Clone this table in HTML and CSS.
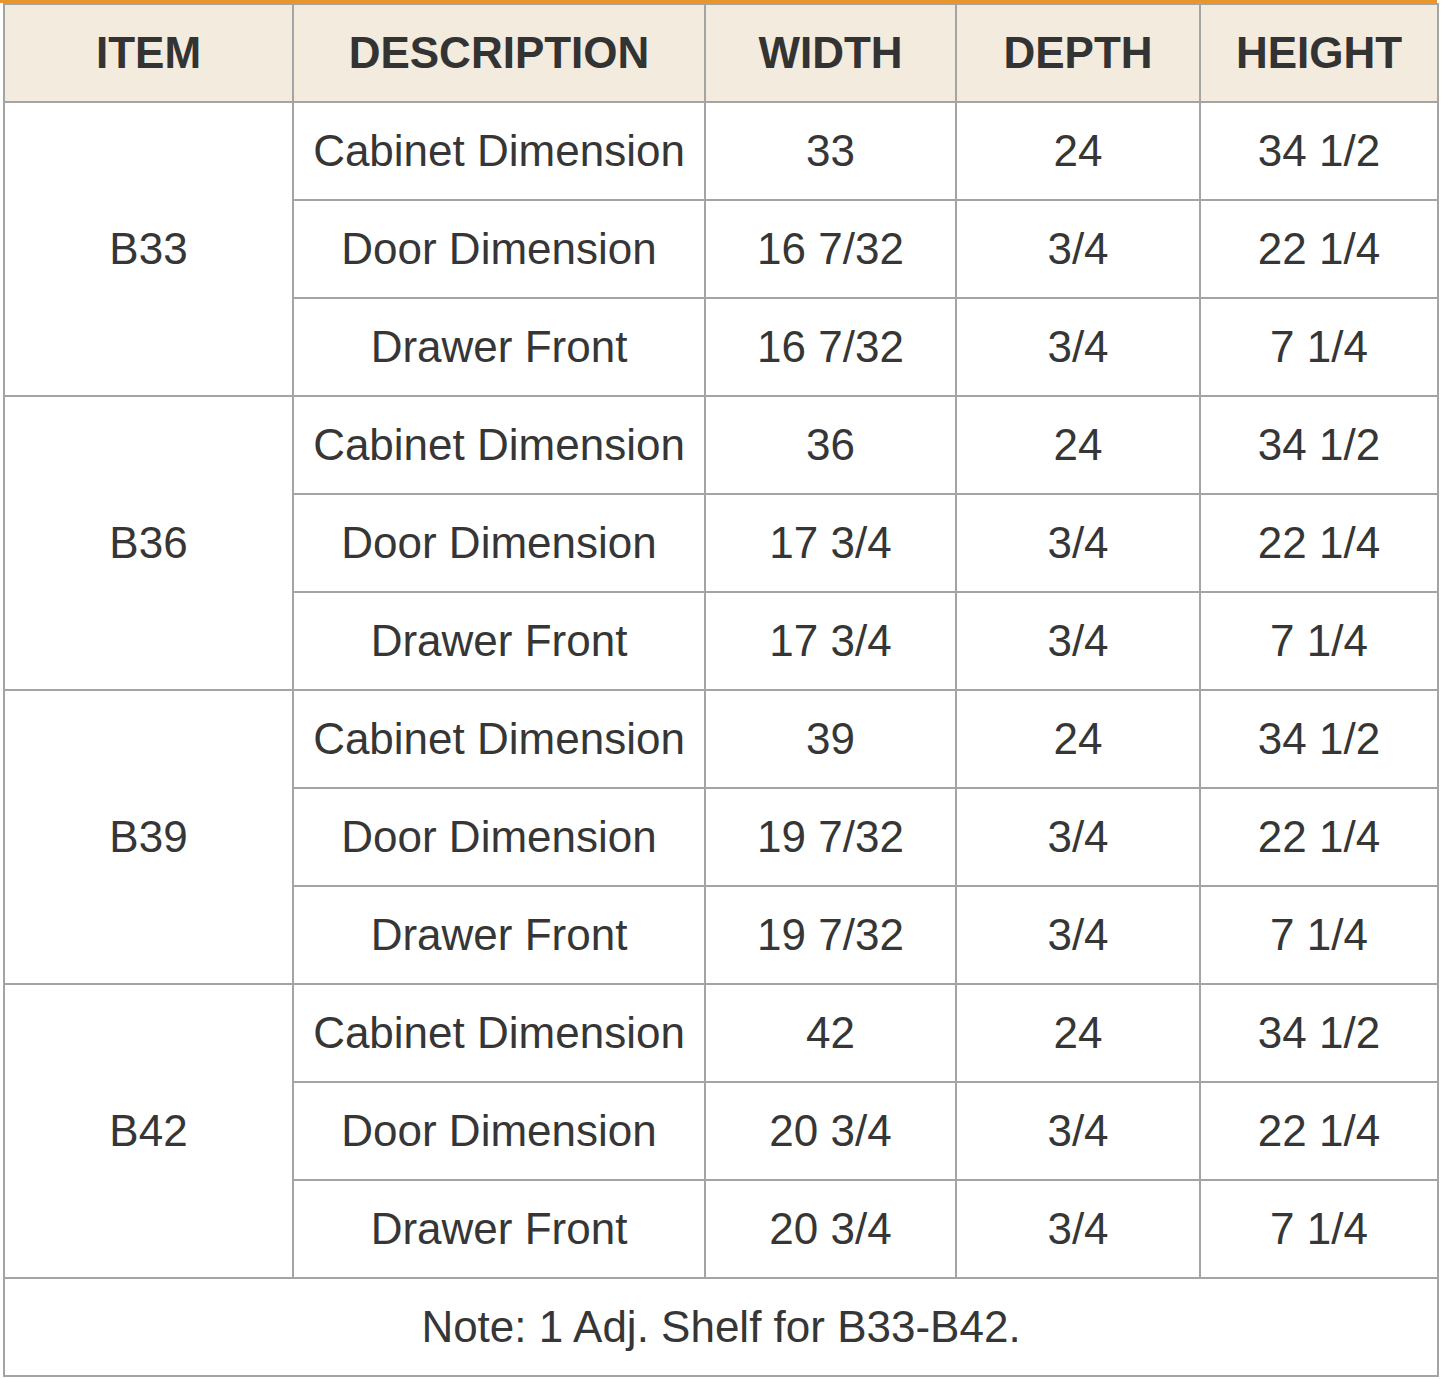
FILE: index.html
```html
<!DOCTYPE html>
<html>
<head>
<meta charset="utf-8">
<link rel="stylesheet" href="styles.css">
</head>
<body>
<div class="wrap">
<table class="spec">
<colgroup>
<col class="c1"><col class="c2"><col class="c3"><col class="c4"><col class="c5">
</colgroup>
<thead>
<tr><th>ITEM</th><th>DESCRIPTION</th><th>WIDTH</th><th>DEPTH</th><th>HEIGHT</th></tr>
</thead>
<tbody>
<tr><td rowspan="3">B33</td><td>Cabinet Dimension</td><td>33</td><td>24</td><td>34 1/2</td></tr>
<tr><td>Door Dimension</td><td>16 7/32</td><td>3/4</td><td>22 1/4</td></tr>
<tr><td>Drawer Front</td><td>16 7/32</td><td>3/4</td><td>7 1/4</td></tr>
<tr><td rowspan="3">B36</td><td>Cabinet Dimension</td><td>36</td><td>24</td><td>34 1/2</td></tr>
<tr><td>Door Dimension</td><td>17 3/4</td><td>3/4</td><td>22 1/4</td></tr>
<tr><td>Drawer Front</td><td>17 3/4</td><td>3/4</td><td>7 1/4</td></tr>
<tr><td rowspan="3">B39</td><td>Cabinet Dimension</td><td>39</td><td>24</td><td>34 1/2</td></tr>
<tr><td>Door Dimension</td><td>19 7/32</td><td>3/4</td><td>22 1/4</td></tr>
<tr><td>Drawer Front</td><td>19 7/32</td><td>3/4</td><td>7 1/4</td></tr>
<tr><td rowspan="3">B42</td><td>Cabinet Dimension</td><td>42</td><td>24</td><td>34 1/2</td></tr>
<tr><td>Door Dimension</td><td>20 3/4</td><td>3/4</td><td>22 1/4</td></tr>
<tr><td>Drawer Front</td><td>20 3/4</td><td>3/4</td><td>7 1/4</td></tr>
<tr><td colspan="5" class="note">Note: 1 Adj. Shelf for B33-B42.</td></tr>
</tbody>
</table>
</div>
</body>
</html>
```

FILE: styles.css
```css
html, body {
  margin: 0;
  padding: 0;
  background: #ffffff;
}
.wrap {
  width: 1437px;
  border-top: 3px solid #e8952c;
}
.spec {
  margin-left: 3px;
  width: 1434px;
  border-collapse: collapse;
  table-layout: fixed;
  font-family: "Liberation Sans", Arial, sans-serif;
  color: #363636;
}
.c1 { width: 289px; }
.c2 { width: 412px; }
.c3 { width: 251px; }
.c4 { width: 244px; }
.c5 { width: 238px; }
.spec tr {
  height: 98px;
}
.spec th, .spec td {
  border: 2px solid #a4a4a4;
  padding: 0;
  text-align: center;
  vertical-align: middle;
  font-size: 44px;
  line-height: 1;
}
.spec th {
  background: #f3ebdd;
  font-weight: bold;
  color: #333333;
}
.spec td {
  font-weight: normal;
}
```
